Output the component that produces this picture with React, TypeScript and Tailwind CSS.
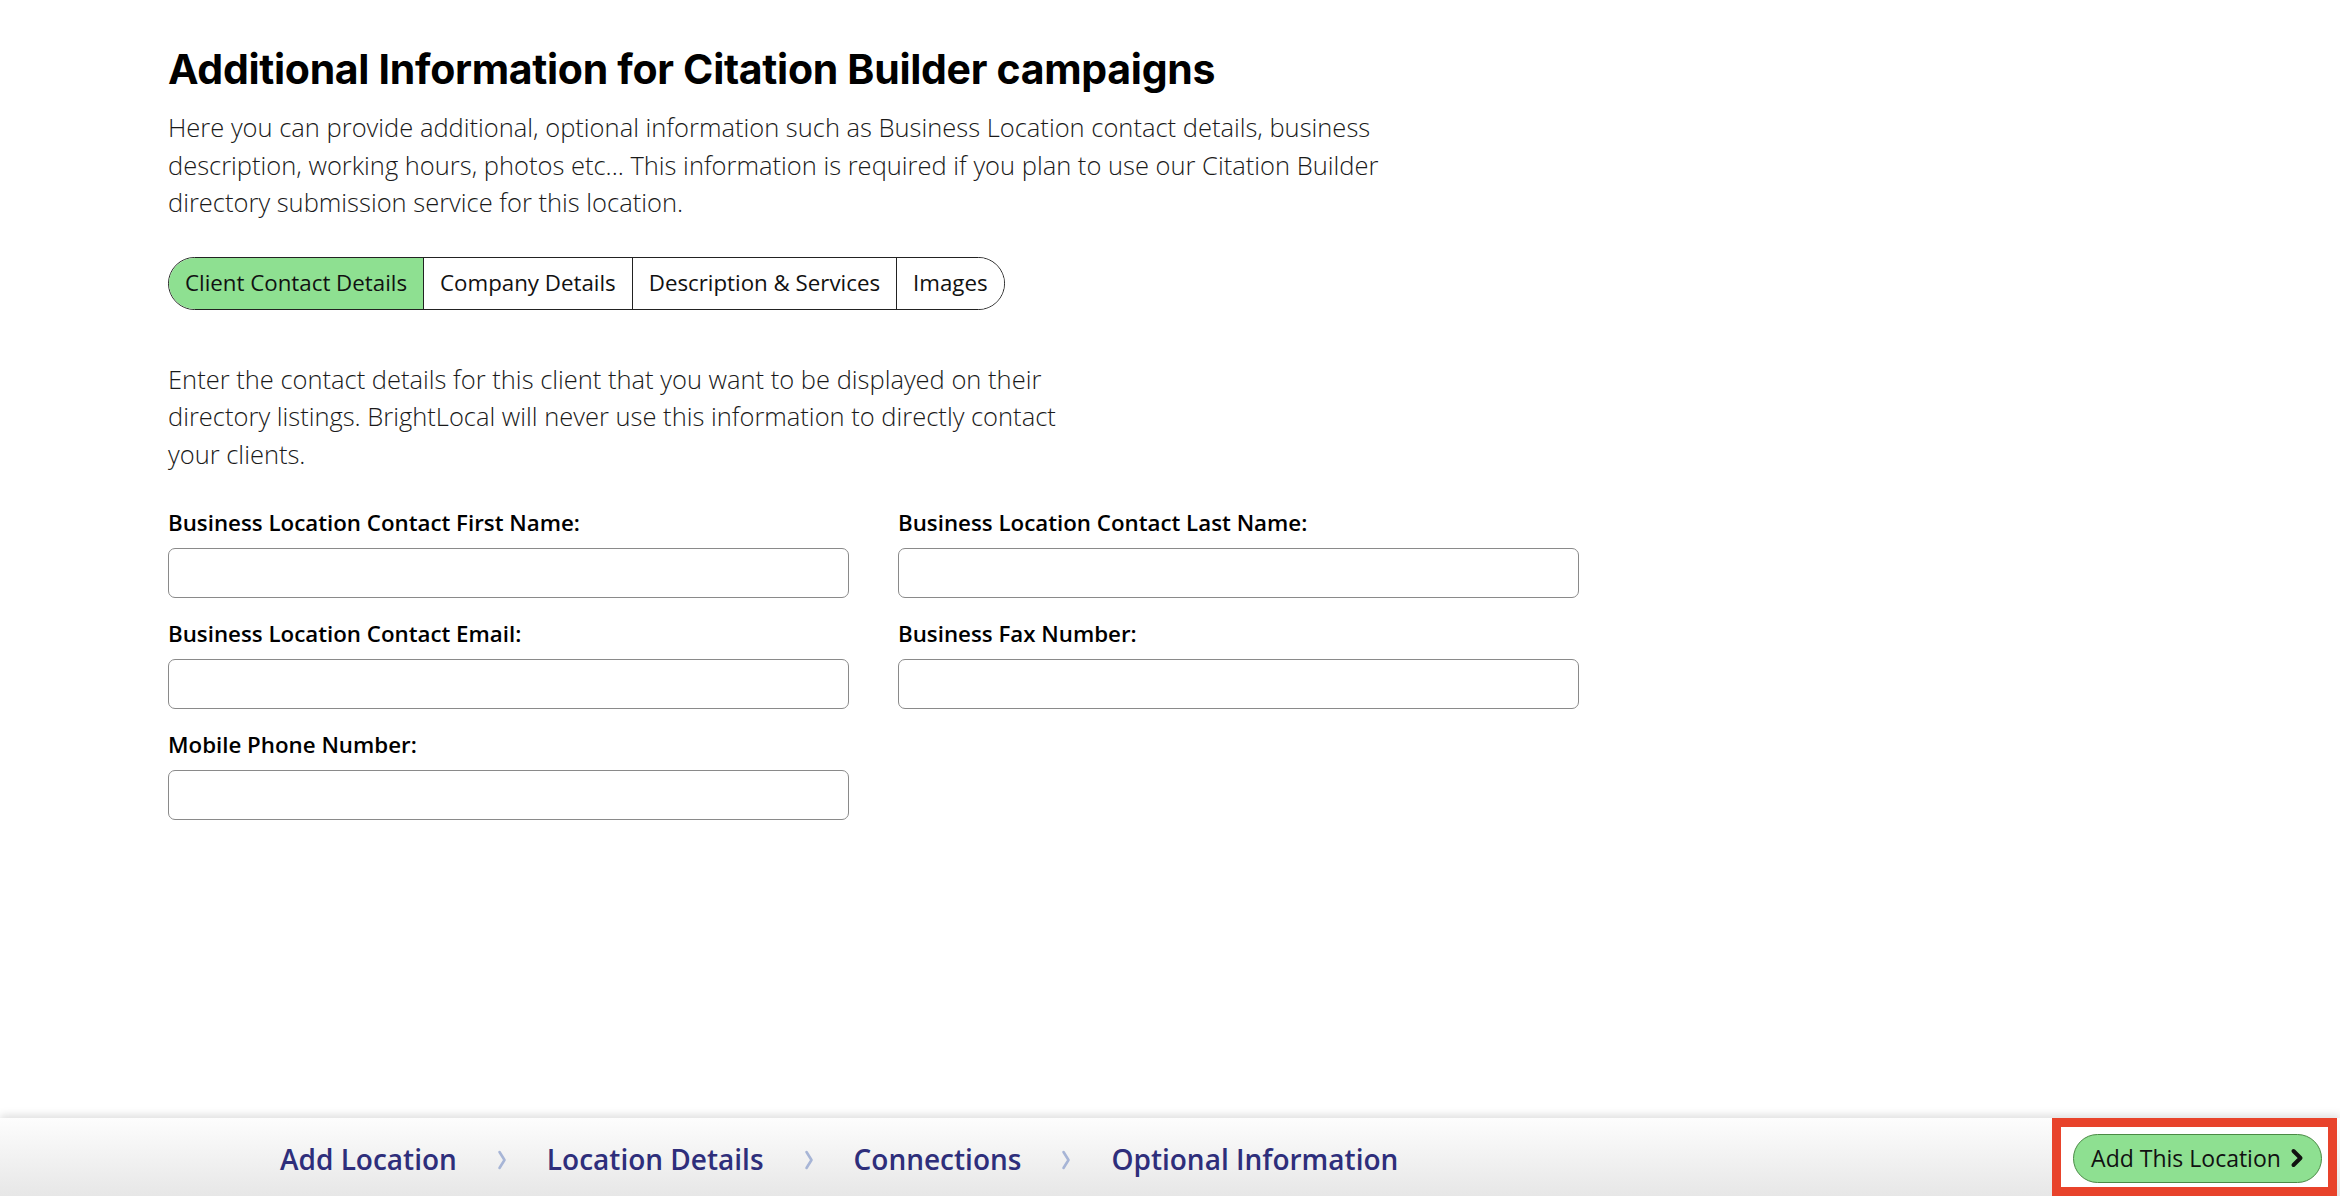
import React from "react";

const tabs = ["Client Contact Details", "Company Details", "Description & Services", "Images"];

const fields = [
  "Business Location Contact First Name:",
  "Business Location Contact Last Name:",
  "Business Location Contact Email:",
  "Business Fax Number:",
  "Mobile Phone Number:",
];

const steps = ["Add Location", "Location Details", "Connections", "Optional Information"];

const Crumb = () => (
  <svg width="10" height="22" viewBox="0 0 10 22" fill="none" className="shrink-0 mt-[3px]">
    <path d="M2.5 3 L7.5 11 L2.5 19" stroke="#a7b5d6" strokeWidth="2.6" strokeLinecap="round" strokeLinejoin="round" />
  </svg>
);

// bold chevron used on the primary button
const BoldChevron = () => (
  <svg width="14" height="20" viewBox="0 0 14 20" fill="none" className="shrink-0">
    <path d="M3.5 3 L10.5 10 L3.5 17" stroke="#111" strokeWidth="4" strokeLinecap="round" strokeLinejoin="round" />
  </svg>
);

export default function App() {
  return (
    <div className="h-screen flex flex-col bg-white text-black font-['Open_Sans',sans-serif]">
      <main className="flex-1 pl-[168px] pt-[45px]">
        <h1 className="font-['Inter',sans-serif] font-bold text-[41px] leading-[48px] tracking-[-0.3px]">
          Additional Information for Citation Builder campaigns
        </h1>
        <p className="mt-4 max-w-[1260px] text-[25.5px] font-light leading-[37.5px] text-[#1a1a1a]">
          Here you can provide additional, optional information such as Business Location contact details, business
          description, working hours, photos etc... This information is required if you plan to use our Citation Builder
          directory submission service for this location.
        </p>

        <div className="mt-[35px] flex">
          <div className="flex h-[53px] border border-[#222] rounded-full overflow-hidden">
            {tabs.map((t, i) => (
              <button
                key={t}
                className={
                  "px-4 text-[22.3px] text-[#111] " +
                  (i === 0 ? "bg-[#8ee091] " : "bg-white border-l border-[#222] ")
                }
              >
                {t}
              </button>
            ))}
          </div>
        </div>

        <p className="mt-[51px] max-w-[940px] text-[25.5px] font-light leading-[37.5px] text-[#1a1a1a]">
          Enter the contact details for this client that you want to be displayed on their directory listings.
          BrightLocal will never use this information to directly contact your clients.
        </p>

        <div className="mt-[35px] grid grid-cols-[681px_681px] gap-x-[49px] gap-y-[21px]">
          {fields.map((f) => (
            <div key={f} className="flex flex-col">
              <label className="text-[22.3px] font-semibold leading-[30px] mb-[10px]">{f}</label>
              <input className="h-[50px] border border-[#8a8a8a] rounded-[7px] px-3 text-[20px] outline-none" />
            </div>
          ))}
        </div>
      </main>

      <footer className="h-[78px] flex items-stretch bg-gradient-to-b from-[#fdfdfd] to-[#e7e7e7] shadow-[0_-3px_8px_rgba(0,0,0,0.13)]">
        <nav className="flex-1 flex items-center gap-[40px] pl-[280px] pt-[3px] text-[28px] font-semibold text-[#2e2e7b]">
          {steps.map((s, i) => (
            <React.Fragment key={s}>
              {i > 0 && <Crumb />}
              <span>{s}</span>
            </React.Fragment>
          ))}
        </nav>
        <div className="w-[285px] mr-[3px] border-[9px] border-[#e8432b] bg-white flex items-center pl-[12px] pr-[6px]">
          <button className="flex-1 h-[49px] mt-[2px] rounded-full border border-[#4a8a45] bg-[#8ee091] flex items-center justify-center gap-[9px] text-[23px] text-[#111]">
            Add This Location
            <BoldChevron />
          </button>
        </div>
      </footer>
    </div>
  );
}
